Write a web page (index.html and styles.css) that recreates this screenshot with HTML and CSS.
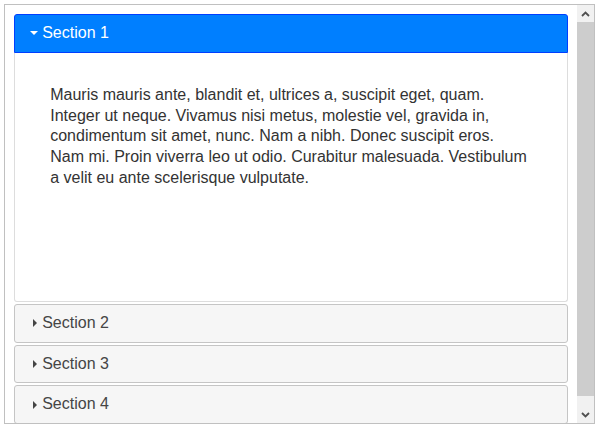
FILE: index.html
```html
<!DOCTYPE html>
<html>
<head>
<meta charset="utf-8">
<link rel="stylesheet" href="styles.css">
</head>
<body>
<div class="frame">
  <div class="viewport">
    <div class="accordion">
      <h3 class="header active"><span class="icon down"></span>Section 1</h3>
      <div class="content">
        <p>Mauris mauris ante, blandit et, ultrices a, suscipit eget, quam. Integer ut neque. Vivamus nisi metus, molestie vel, gravida in, condimentum sit amet, nunc. Nam a nibh. Donec suscipit eros. Nam mi. Proin viverra leo ut odio. Curabitur malesuada. Vestibulum a velit eu ante scelerisque vulputate.</p>
      </div>
      <h3 class="header"><span class="icon right"></span>Section 2</h3>
      <h3 class="header"><span class="icon right"></span>Section 3</h3>
      <h3 class="header"><span class="icon right"></span>Section 4</h3>
    </div>
  </div>
  <div class="scrollbar" aria-hidden="true">
    <div class="sb-button">
      <svg width="9" height="6" viewBox="0 0 9 6"><path d="M1 5 L4.5 1.5 L8 5" fill="none" stroke="#505050" stroke-width="1.8"/></svg>
    </div>
    <div class="sb-track"><div class="sb-thumb"></div></div>
    <div class="sb-button">
      <svg width="9" height="6" viewBox="0 0 9 6"><path d="M1 1 L4.5 4.5 L8 1" fill="none" stroke="#505050" stroke-width="1.8"/></svg>
    </div>
  </div>
</div>
</body>
</html>
```

FILE: styles.css
```css
html, body {
  margin: 0;
  padding: 0;
  background: #fff;
}
body {
  padding: 4px;
  font-family: "Liberation Sans", Arial, Helvetica, sans-serif;
  font-size: 16px;
}
.frame {
  display: flex;
  width: 589px;
  height: 418px;
  border: 1px solid #c0c0c0;
}
.viewport {
  flex: 1;
  min-width: 0;
  overflow: hidden;
}
.scrollbar {
  width: 17px;
  flex: none;
  display: flex;
  flex-direction: column;
  background: #f1f1f1;
}
.sb-button {
  height: 17px;
  flex: none;
  display: flex;
  align-items: center;
  justify-content: center;
}
.sb-button svg {
  display: block;
}
.sb-track {
  flex: 1;
}
.sb-thumb {
  height: 374px;
  background: #cdcdcd;
}
.accordion {
  padding: 9px;
  line-height: 1.3;
}
.header {
  display: flex;
  align-items: center;
  margin: 2px 0 0 0;
  padding: 8px 8px 8px 11.2px;
  font-size: 16px;
  font-weight: normal;
  line-height: 1.3;
  background: #f6f6f6;
  border: 1px solid #c5c5c5;
  border-radius: 3px;
  color: #454545;
  cursor: pointer;
}
.header:first-child {
  margin-top: 0;
}
.header.active {
  background: #007fff;
  border-color: #003eff;
  color: #ffffff;
  border-radius: 3px 3px 0 0;
}
.icon {
  display: flex;
  align-items: center;
  width: 16px;
  height: 16px;
  flex: none;
}
.icon::before {
  content: "";
  display: block;
  width: 0;
  height: 0;
}
.icon.down::before {
  margin-left: 4px;
  border-left: 4px solid transparent;
  border-right: 4px solid transparent;
  border-top: 4px solid #ffffff;
}
.icon.right::before {
  margin-left: 7px;
  border-top: 4px solid transparent;
  border-bottom: 4px solid transparent;
  border-left: 4px solid #454545;
}
.content {
  height: 216px;
  padding: 16px 35.2px;
  border: 1px solid #dddddd;
  border-top: 0;
  border-radius: 0 0 3px 3px;
  background: #ffffff;
  color: #333333;
  font-size: 16px;
  line-height: 1.3;
  overflow: hidden;
}
.content p {
  margin: 16px 0;
}
```
